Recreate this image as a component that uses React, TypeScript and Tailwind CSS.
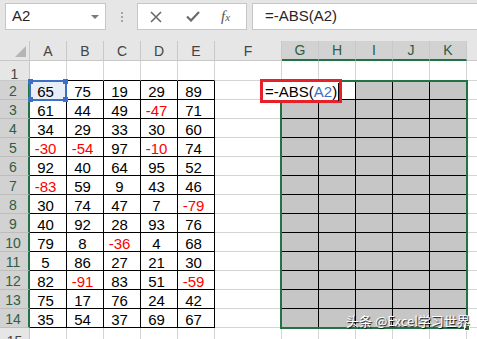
import React from 'react';

const WIDTHS = [37, 37, 37, 37, 37, 67, 37, 37, 37, 37, 37];
const LETTERS = ['A', 'B', 'C', 'D', 'E', 'F', 'G', 'H', 'I', 'J', 'K'];

const DATA: number[][] = [
  [65, 75, 19, 29, 89],
  [61, 44, 49, -47, 71],
  [34, 29, 33, 30, 60],
  [-30, -54, 97, -10, 74],
  [92, 40, 64, 95, 52],
  [-83, 59, 9, 43, 46],
  [30, 74, 47, 7, -79],
  [40, 92, 28, 93, 76],
  [79, 8, -36, 4, 68],
  [5, 86, 27, 21, 30],
  [82, -91, 83, 51, -59],
  [75, 17, 76, 24, 42],
  [35, 54, 37, 69, 67],
];

const ROWS = Array.from({ length: 15 }, (_, i) => i + 1);

const TopBar: React.FC = () => (
  <div className="flex h-[41px] items-start pt-[3px] pl-[5px]">
    {/* name box */}
    <div className="relative flex h-[27px] w-[101px] items-center border border-[#c6c6c6] bg-white pl-[6px] text-[15px] text-[#262626]">
      A2
      <div className="absolute right-[6px] top-[11px] h-0 w-0 border-x-[4px] border-t-[4px] border-x-transparent border-t-[#7a7a7a]" />
    </div>
    {/* grip dots */}
    <div className="ml-[15px] mt-[9px] flex flex-col gap-[2px]">
      <div className="h-[2px] w-[2px] bg-[#a6a6a6]" />
      <div className="h-[2px] w-[2px] bg-[#a6a6a6]" />
      <div className="h-[2px] w-[2px] bg-[#a6a6a6]" />
    </div>
    {/* cancel / enter / fx */}
    <div className="ml-[14px] flex h-[27px] w-[110px] items-center border border-[#c6c6c6] bg-white pl-[12px] text-[#6b6b6b]">
      <svg width="12" height="12" viewBox="0 0 12 12" className="mr-[24px]">
        <path d="M1 1 L11 11 M11 1 L1 11" stroke="#6b6b6b" strokeWidth="1.6" />
      </svg>
      <svg width="14" height="11" viewBox="0 0 14 11" className="mr-[21px]">
        <path d="M1 5.5 L5 9.5 L13 1" stroke="#6b6b6b" strokeWidth="2.2" fill="none" />
      </svg>
      <span className="font-['Liberation_Serif'] text-[15px] italic leading-none text-[#555]">
        f<span className="text-[11px]">x</span>
      </span>
    </div>
    {/* formula input */}
    <div className="ml-[5px] flex h-[27px] flex-1 items-center border border-r-0 border-[#c6c6c6] bg-white pl-[12px] text-[15px] text-[#262626]">
      =-ABS(A2)
    </div>
  </div>
);

const HeaderRow: React.FC = () => (
  <div className="flex h-[20px]">
    <div className="relative h-[20px] w-[30px] border-r border-b border-[#c8c8c8]">
      <div className="absolute left-[15px] top-[5px] h-0 w-0 border-b-[11px] border-l-[11px] border-b-[#b5b5b5] border-l-transparent" />
    </div>
    {LETTERS.map((l, i) => {
      const sel = i >= 6;
      return (
        <div
          key={l}
          style={{ width: WIDTHS[i] }}
          className={
            sel
              ? 'flex h-[20px] items-center justify-center border-r border-b-2 border-r-[#c8c8c8] border-b-[#217346] bg-[#d2d2d2] pt-[1px] text-[14px] text-[#2f5d44]'
              : 'flex h-[20px] items-center justify-center border-r border-b border-[#c8c8c8] pt-[1px] text-[14px] text-[#444]'
          }
        >
          {l}
        </div>
      );
    })}
    <div className="h-[20px] flex-1 border-b border-[#c8c8c8]" />
  </div>
);

const Row: React.FC<{ r: number }> = ({ r }) => {
  const inData = r >= 2 && r <= 14;
  const h = r === 1 ? 'h-[20px]' : 'h-[19px]';
  return (
    <div className={`flex ${h}`}>
      <div
        className={
          inData
            ? 'flex h-full w-[30px] items-center justify-center border-r-2 border-b border-r-[#217346] border-b-[#bdbdbd] bg-[#d2d2d2] pt-[2px] pr-[2px] text-[14px] text-[#2f5d44]'
            : 'flex h-full w-[30px] items-start justify-center border-r border-b border-[#c8c8c8] pt-[3px] text-[14px] text-[#444]'
        }
      >
        {r}
      </div>
      {WIDTHS.map((w, c) => {
        const editCell = r === 2 && c === 6;
        const blackRight = inData && !editCell;
        const blackB = r <= 14 && (c <= 4 || c >= 6);
        let bg = 'bg-white';
        if (inData && c >= 6) bg = r === 2 && (c === 6 || c === 7) ? 'bg-white' : 'bg-[#c6c6c6]';
        if (r === 2 && c === 0) bg = 'bg-[#e8eef8]';
        const v = inData && c <= 4 ? DATA[r - 2][c] : null;
        return (
          <div
            key={c}
            style={{ width: w }}
            className={[
              'flex h-full items-center justify-center border-r border-b pt-[3px] pr-[5px] text-[15px] leading-none',
              blackRight ? 'border-r-black' : editCell ? 'border-r-white' : 'border-r-[#d4d4d4]',
              blackB ? 'border-b-black' : 'border-b-[#d4d4d4]',
              bg,
              v !== null && v < 0 ? 'text-[#ff0000]' : 'text-black',
            ].join(' ')}
          >
            {v}
          </div>
        );
      })}
      <div className="h-full flex-1 border-b border-[#d4d4d4] bg-white" />
    </div>
  );
};

const App: React.FC = () => {
  return (
    <div className="relative h-[339px] w-[477px] overflow-hidden bg-[#e6e6e6] font-['Liberation_Sans',sans-serif]">
      <TopBar />
      <HeaderRow />
      {ROWS.map((r) => (
        <Row key={r} r={r} />
      ))}

      {/* reference highlight on A2 */}
      <div className="absolute left-[29px] top-[80px] h-[21px] w-[38px] border-2 border-[#3d6fc6]">
        <div className="absolute -left-[3px] -top-[3px] h-[5px] w-[5px] bg-[#3d6fc6]" />
        <div className="absolute -right-[3px] -top-[3px] h-[5px] w-[5px] bg-[#3d6fc6]" />
        <div className="absolute -bottom-[3px] -left-[3px] h-[5px] w-[5px] bg-[#3d6fc6]" />
        <div className="absolute -bottom-[3px] -right-[3px] h-[5px] w-[5px] bg-[#3d6fc6]" />
      </div>

      {/* selected range G2:K14 */}
      <div className="absolute left-[280px] top-[80px] h-[249px] w-[188px] border-2 border-[#217346]">
        <div className="absolute -bottom-[4px] -right-[4px] h-[6px] w-[6px] border border-white bg-[#217346]" />
      </div>

      {/* in-cell editor with red annotation box */}
      <div className="absolute left-[260px] top-[79px] flex h-[24px] w-[82px] items-center overflow-visible whitespace-nowrap border-[3px] border-[#e6212a] bg-white pl-[2px] pt-[1px] text-[15px] leading-none text-black">
        <span className="shrink-0">=-ABS(</span>
        <span className="shrink-0 text-[#3d6fc6]">A2</span>
        <span className="shrink-0">)</span>
        <span className="ml-[1px] h-[18px] w-[1px] shrink-0 bg-black" />
      </div>

      {/* watermark */}
      <div className="absolute left-[346px] top-[314px] whitespace-nowrap font-['Noto_Sans_CJK_SC',sans-serif] text-[13px] leading-none text-white [text-shadow:1px_1px_1px_rgba(0,0,0,0.9)]">
        头条 @Excel学习世界
      </div>
    </div>
  );
};

export default App;
